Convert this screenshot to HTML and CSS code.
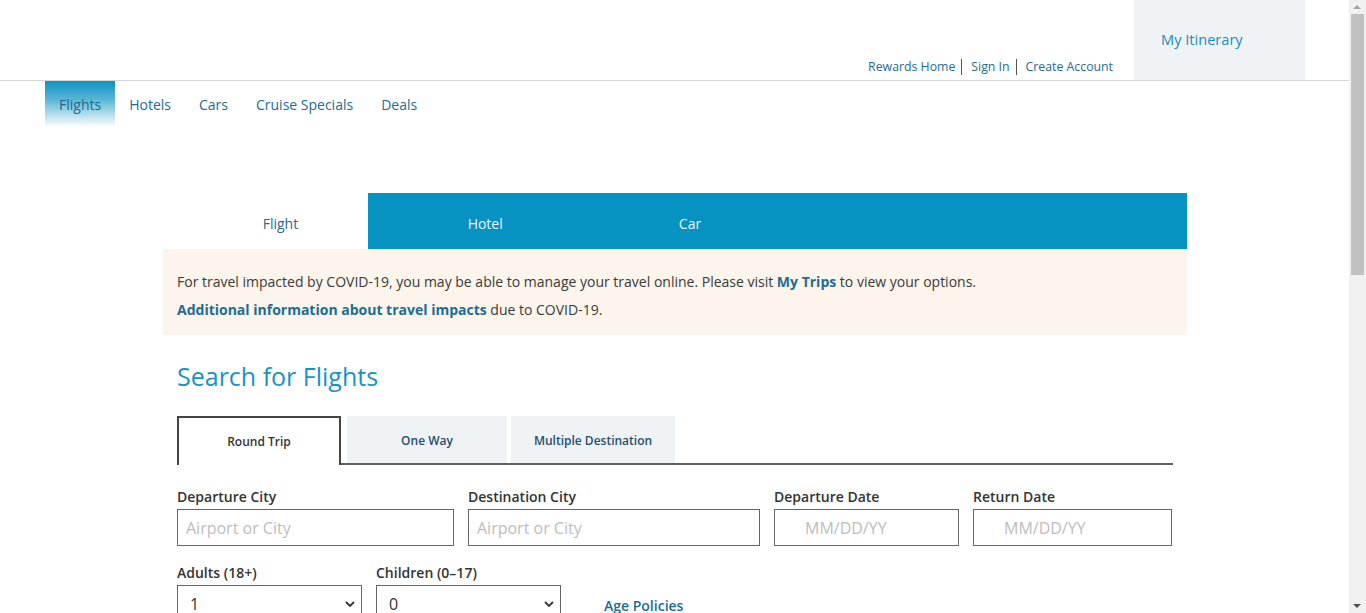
FILE: index.html
```html
<!DOCTYPE html>
<html lang="en">
<head>
<meta charset="utf-8">
<title>Flights</title>
<link rel="stylesheet" href="styles.css">
</head>
<body>
<header class="topbar">
  <div class="toplinks">
    <a href="#" class="toplink">Rewards Home</a>
    <a href="#" class="toplink">Sign In</a>
    <a href="#" class="toplink">Create Account</a>
  </div>
  <a href="#" class="itinerary">My Itinerary</a>
</header>
<nav class="mainnav">
  <a href="#" class="navitem active">Flights</a>
  <a href="#" class="navitem">Hotels</a>
  <a href="#" class="navitem">Cars</a>
  <a href="#" class="navitem">Cruise Specials</a>
  <a href="#" class="navitem">Deals</a>
</nav>
<main class="container">
  <div class="prodtabs">
    <div class="prodtab current">Flight</div>
    <div class="prodtab">Hotel</div>
    <div class="prodtab">Car</div>
    <div class="prodtab"></div>
    <div class="prodtab"></div>
  </div>
  <div class="notice">
    <p>For travel impacted by COVID-19, you may be able to manage your travel online. Please visit <a href="#">My Trips</a> to view your options.</p>
    <p><a href="#">Additional information about travel impacts</a> due to COVID-19.</p>
  </div>
  <section class="search">
    <h1 class="title">Search for Flights</h1>
    <div class="triptabs">
      <div class="triptab selected">Round Trip</div>
      <div class="triptab oneway">One Way</div>
      <div class="triptab multi">Multiple Destination</div>
    </div>
    <div class="row">
      <label class="field w-dep"><span class="lbl">Departure City</span><input class="inp" placeholder="Airport or City"></label>
      <label class="field w-dest"><span class="lbl">Destination City</span><input class="inp" placeholder="Airport or City"></label>
      <label class="field w-ddate"><span class="lbl">Departure Date</span><input class="inp date" placeholder="MM/DD/YY"></label>
      <label class="field w-rdate"><span class="lbl">Return Date</span><input class="inp date" placeholder="MM/DD/YY"></label>
    </div>
    <div class="row row2">
      <label class="field w-sel"><span class="lbl">Adults (18+)</span>
        <div class="sel"><span>1</span><svg class="chev" width="10" height="6" viewBox="0 0 10 6"><path d="M1 1l4 4 4-4" fill="none" stroke="#333" stroke-width="1.8"/></svg></div>
      </label>
      <label class="field w-sel"><span class="lbl">Children (0–17)</span>
        <div class="sel"><span>0</span><svg class="chev" width="10" height="6" viewBox="0 0 10 6"><path d="M1 1l4 4 4-4" fill="none" stroke="#333" stroke-width="1.8"/></svg></div>
      </label>
      <a href="#" class="agepol">Age Policies</a>
    </div>
    <div class="row row3">
      <label class="field w-dep"><span class="lbl">Class of Service</span>
        <div class="sel"><span>Economy</span><svg class="chev" width="10" height="6" viewBox="0 0 10 6"><path d="M1 1l4 4 4-4" fill="none" stroke="#333" stroke-width="1.8"/></svg></div>
      </label>
    </div>
    <div class="spacer"></div>
  </section>
</main>
<div class="scrollbar" aria-hidden="true">
  <span class="sb-up"></span>
  <span class="sb-thumb"></span>
  <span class="sb-down"></span>
</div>
</body>
</html>
```
FILE: styles.css
```css
* { box-sizing: border-box; }

body {
  margin: 0 17px 0 0;
  font-family: "Open Sans", "Liberation Sans", sans-serif;
  color: #333;
  background: #fff;
}

a { text-decoration: none; }

/* fake browser scrollbar overlay */
.scrollbar {
  position: fixed;
  top: 0;
  right: 0;
  width: 17px;
  height: 100vh;
  background: #f1f1f1;
}
.sb-up {
  position: absolute;
  top: 5px;
  left: 4px;
  width: 0;
  height: 0;
  border-left: 4px solid transparent;
  border-right: 4px solid transparent;
  border-bottom: 4px solid #a3a3a3;
}
.sb-down {
  position: absolute;
  bottom: 5px;
  left: 4px;
  width: 0;
  height: 0;
  border-left: 4px solid transparent;
  border-right: 4px solid transparent;
  border-top: 4px solid #505050;
}
.sb-thumb {
  position: absolute;
  top: 14px;
  left: 2px;
  width: 13px;
  height: 261px;
  background: #c1c1c1;
}

.topbar {
  height: 81px;
  border-bottom: 1px solid #d6d6d6;
  display: flex;
  justify-content: flex-end;
  padding-right: 44px;
}

.toplinks {
  display: flex;
  align-items: flex-end;
  padding-bottom: 5px;
  margin-right: 21px;
}

.toplink {
  font-size: 12.3px;
  line-height: 16px;
  color: #1b6d96;
  padding: 0 6px 0 9px;
  border-left: 1px solid #555;
}
.toplink:first-child { border-left: none; padding-left: 0; }
.toplink:last-child { padding-right: 0; }

.itinerary {
  width: 171px;
  height: 80px;
  background: #f0f3f6;
  color: #1b8dbd;
  font-size: 14.6px;
  padding: 0 0 2px 27px;
  display: flex;
  align-items: center;
}

.mainnav {
  display: flex;
  padding-left: 45px;
  height: 46px;
}

.navitem {
  padding: 0 14px;
  font-size: 14px;
  color: #1b6d96;
  display: flex;
  align-items: center;
  height: 46px;
}
.navitem.active {
  background: linear-gradient(to bottom, #0b93c2 0%, #59b4d6 40%, #ffffff 100%);
  color: #1b6a90;
}

.container {
  width: 1024px;
  margin: 66px 0 0 163px;
}

.prodtabs {
  display: flex;
  background: #0693c1;
  height: 56px;
}
.prodtab {
  flex: 1;
  display: flex;
  align-items: center;
  justify-content: center;
  padding: 4px 0 0 30px;
  font-size: 14px;
  color: #e8f6fb;
}
.prodtab.current {
  background: #fff;
  color: #2b6a8e;
}

.notice {
  background: #fdf4eb;
  padding: 19px 14px 11px;
  font-size: 14px;
  color: #3a3a3a;
}
.notice p { margin: 0; line-height: 28px; }
.notice a { color: #1b6d96; font-weight: 700; }

.search { padding: 0 14px; }

.title {
  margin: 24px 0 0;
  font-size: 25px;
  font-weight: 400;
  line-height: 34px;
  color: #1a93c3;
}

.triptabs {
  display: flex;
  margin-top: 23px;
  height: 49px;
  border-bottom: 2px solid #5f5f5f;
}
.triptab {
  display: flex;
  align-items: center;
  justify-content: center;
  font-size: 12px;
  font-weight: 600;
  color: #1f4f6f;
  background: #f0f3f6;
  height: 47px;
  padding-top: 2px;
}
.triptab.selected {
  width: 164px;
  background: #fff;
  color: #333;
  border: 2px solid #444;
  border-bottom: none;
  height: 49px;
  margin-bottom: -2px;
  padding-top: 0;
}
.triptab.oneway { width: 160px; margin-left: 6px; }
.triptab.multi { width: 164px; margin-left: 4px; }

.row {
  display: flex;
  gap: 14px;
  margin-top: 22px;
}
.row2 { margin-top: 17px; align-items: flex-start; }
.row3 { margin-top: 24px; }

.field {
  display: flex;
  flex-direction: column;
}
.lbl {
  font-size: 14px;
  font-weight: 600;
  color: #333;
  line-height: 20px;
  margin-bottom: 2px;
}
.w-dep { width: 277px; }
.w-dest { width: 292px; }
.w-ddate { width: 185px; }
.w-rdate { width: 199px; }
.w-sel { width: 185px; }

.inp {
  height: 37px;
  border: 1px solid #666;
  font-family: "Open Sans", "Liberation Sans", sans-serif;
  font-size: 16px;
  padding: 0 8px;
  color: #333;
  outline: none;
}
.inp::placeholder { color: #bdbdbd; }
.inp.date { padding-left: 30px; }

.sel {
  height: 37px;
  border: 1px solid #666;
  display: flex;
  align-items: center;
  justify-content: space-between;
  padding: 0 6px 0 12px;
  font-size: 16px;
  color: #333;
}
.chev { display: block; }

.agepol {
  margin-top: 33px;
  margin-left: 29px;
  font-size: 14px;
  font-weight: 600;
  color: #1b6d96;
}

.spacer { height: 620px; }
```
